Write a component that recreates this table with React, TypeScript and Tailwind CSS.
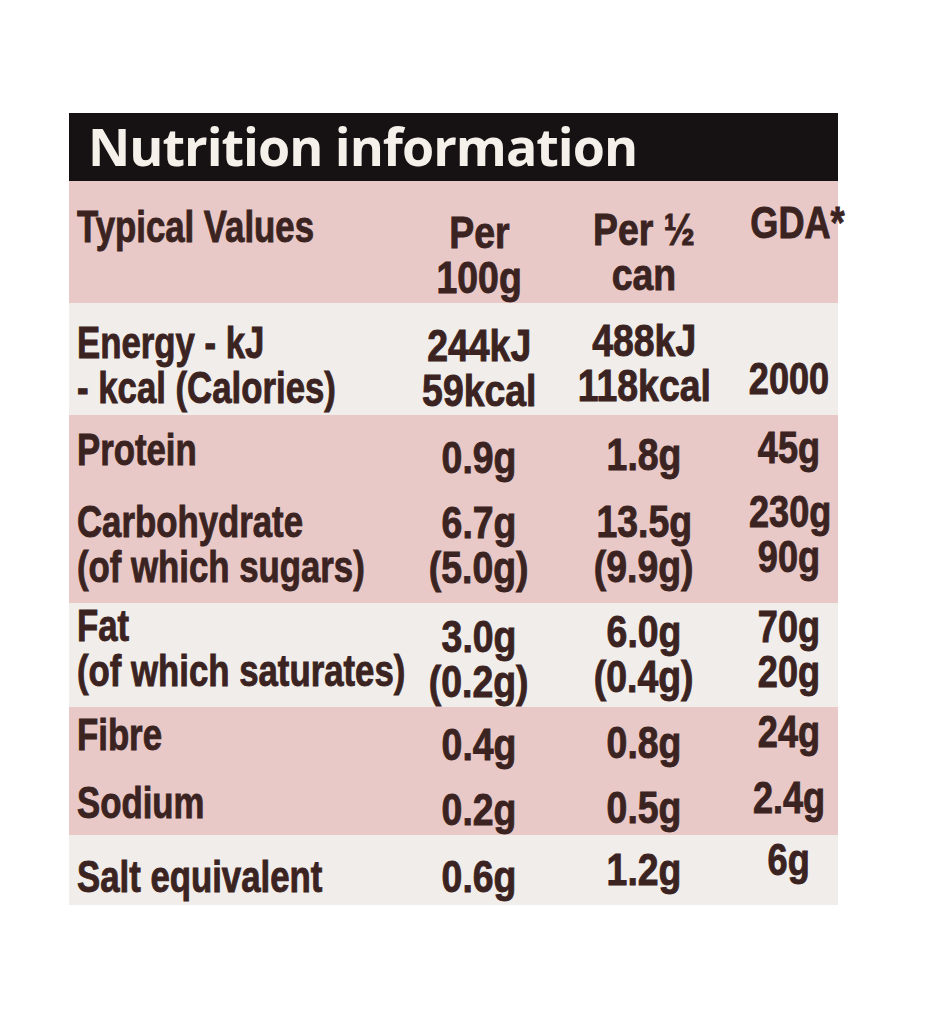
import React from "react";

type Cell = { lines: string[]; pt: number };
type Band = { key: string; light: boolean; h: number; cells: Cell[] };

const bands: Band[] = [
  {
    key: "head",
    light: false,
    h: 122,
    cells: [
      { lines: ["Typical Values"], pt: 23 },
      { lines: ["Per", "100g"], pt: 29 },
      { lines: ["Per ½", "can"], pt: 26 },
      { lines: ["GDA*"], pt: 19 },
    ],
  },
  {
    key: "energy",
    light: true,
    h: 112,
    cells: [
      { lines: ["Energy - kJ", "- kcal (Calories)"], pt: 17 },
      { lines: ["244kJ", "59kcal"], pt: 20 },
      { lines: ["488kJ", "118kcal"], pt: 15 },
      { lines: ["", "2000"], pt: 8 },
    ],
  },
  {
    key: "protein",
    light: false,
    h: 72,
    cells: [
      { lines: ["Protein"], pt: 12 },
      { lines: ["0.9g"], pt: 20 },
      { lines: ["1.8g"], pt: 17 },
      { lines: ["45g"], pt: 10 },
    ],
  },
  {
    key: "carb",
    light: false,
    h: 116,
    cells: [
      { lines: ["Carbohydrate", "(of which sugars)"], pt: 12 },
      { lines: ["6.7g", "(5.0g)"], pt: 13 },
      { lines: ["13.5g", "(9.9g)"], pt: 12 },
      { lines: ["230g", "90g"], pt: 2 },
    ],
  },
  {
    key: "fat",
    light: true,
    h: 104,
    cells: [
      { lines: ["Fat", "(of which saturates)"], pt: 0 },
      { lines: ["3.0g", "(0.2g)"], pt: 11 },
      { lines: ["6.0g", "(0.4g)"], pt: 6 },
      { lines: ["70g", "20g"], pt: 1 },
    ],
  },
  {
    key: "fibre",
    light: false,
    h: 65,
    cells: [
      { lines: ["Fibre"], pt: 5 },
      { lines: ["0.4g"], pt: 15 },
      { lines: ["0.8g"], pt: 13 },
      { lines: ["24g"], pt: 2 },
    ],
  },
  {
    key: "sodium",
    light: false,
    h: 63,
    cells: [
      { lines: ["Sodium"], pt: 8 },
      { lines: ["0.2g"], pt: 15 },
      { lines: ["0.5g"], pt: 13 },
      { lines: ["2.4g"], pt: 3 },
    ],
  },
  {
    key: "salt",
    light: true,
    h: 70,
    cells: [
      { lines: ["Salt equivalent"], pt: 19 },
      { lines: ["0.6g"], pt: 19 },
      { lines: ["1.2g"], pt: 12 },
      { lines: ["6g"], pt: 2 },
    ],
  },
];

// the print is a heavy condensed grotesque, so squeeze Arial-metric bold text
const cellCls = ["pl-[8px] text-left", "text-center", "text-center", "text-center"];
const lineCls = [
  "inline-block origin-left scale-x-[0.79]",
  "inline-block origin-center scale-x-[0.85]",
  "inline-block origin-center scale-x-[0.85]",
  "inline-block origin-center scale-x-[0.82]",
];

function Row({ band }: { band: Band }) {
  return (
    <div
      className={
        "grid grid-cols-[341px_138px_192px_98px] " +
        (band.light ? "bg-[#f1edea]" : "bg-[#e8c9c7]")
      }
      style={{ height: band.h }}
    >
      {band.cells.map((c, i) => (
        <div key={i} className={"whitespace-nowrap " + cellCls[i]} style={{ paddingTop: c.pt }}>
          {c.lines.map((l, j) => (
            <div key={j} className="h-[45px]">
              <span className={lineCls[i]}>{l}</span>
            </div>
          ))}
        </div>
      ))}
    </div>
  );
}

export default function App() {
  return (
    <div className="min-h-[1020px] w-[932px] bg-white pt-[113px] pl-[69px]">
      <div className="w-[769px]">
        <div className="h-[68px] bg-[#161112] pl-[19px]">
          <h1 className="font-['Open_Sans',sans-serif] text-[52px] font-bold leading-[66px] tracking-[-1px] text-[#f5f1ea]">
            Nutrition information
          </h1>
        </div>
        <div className="font-['Liberation_Sans','Arial',sans-serif] text-[44px] font-bold leading-[45px] text-[#3a2321] [-webkit-text-stroke:0.9px_#3a2321]">
          {bands.map((b) => (
            <Row key={b.key} band={b} />
          ))}
        </div>
      </div>
    </div>
  );
}
